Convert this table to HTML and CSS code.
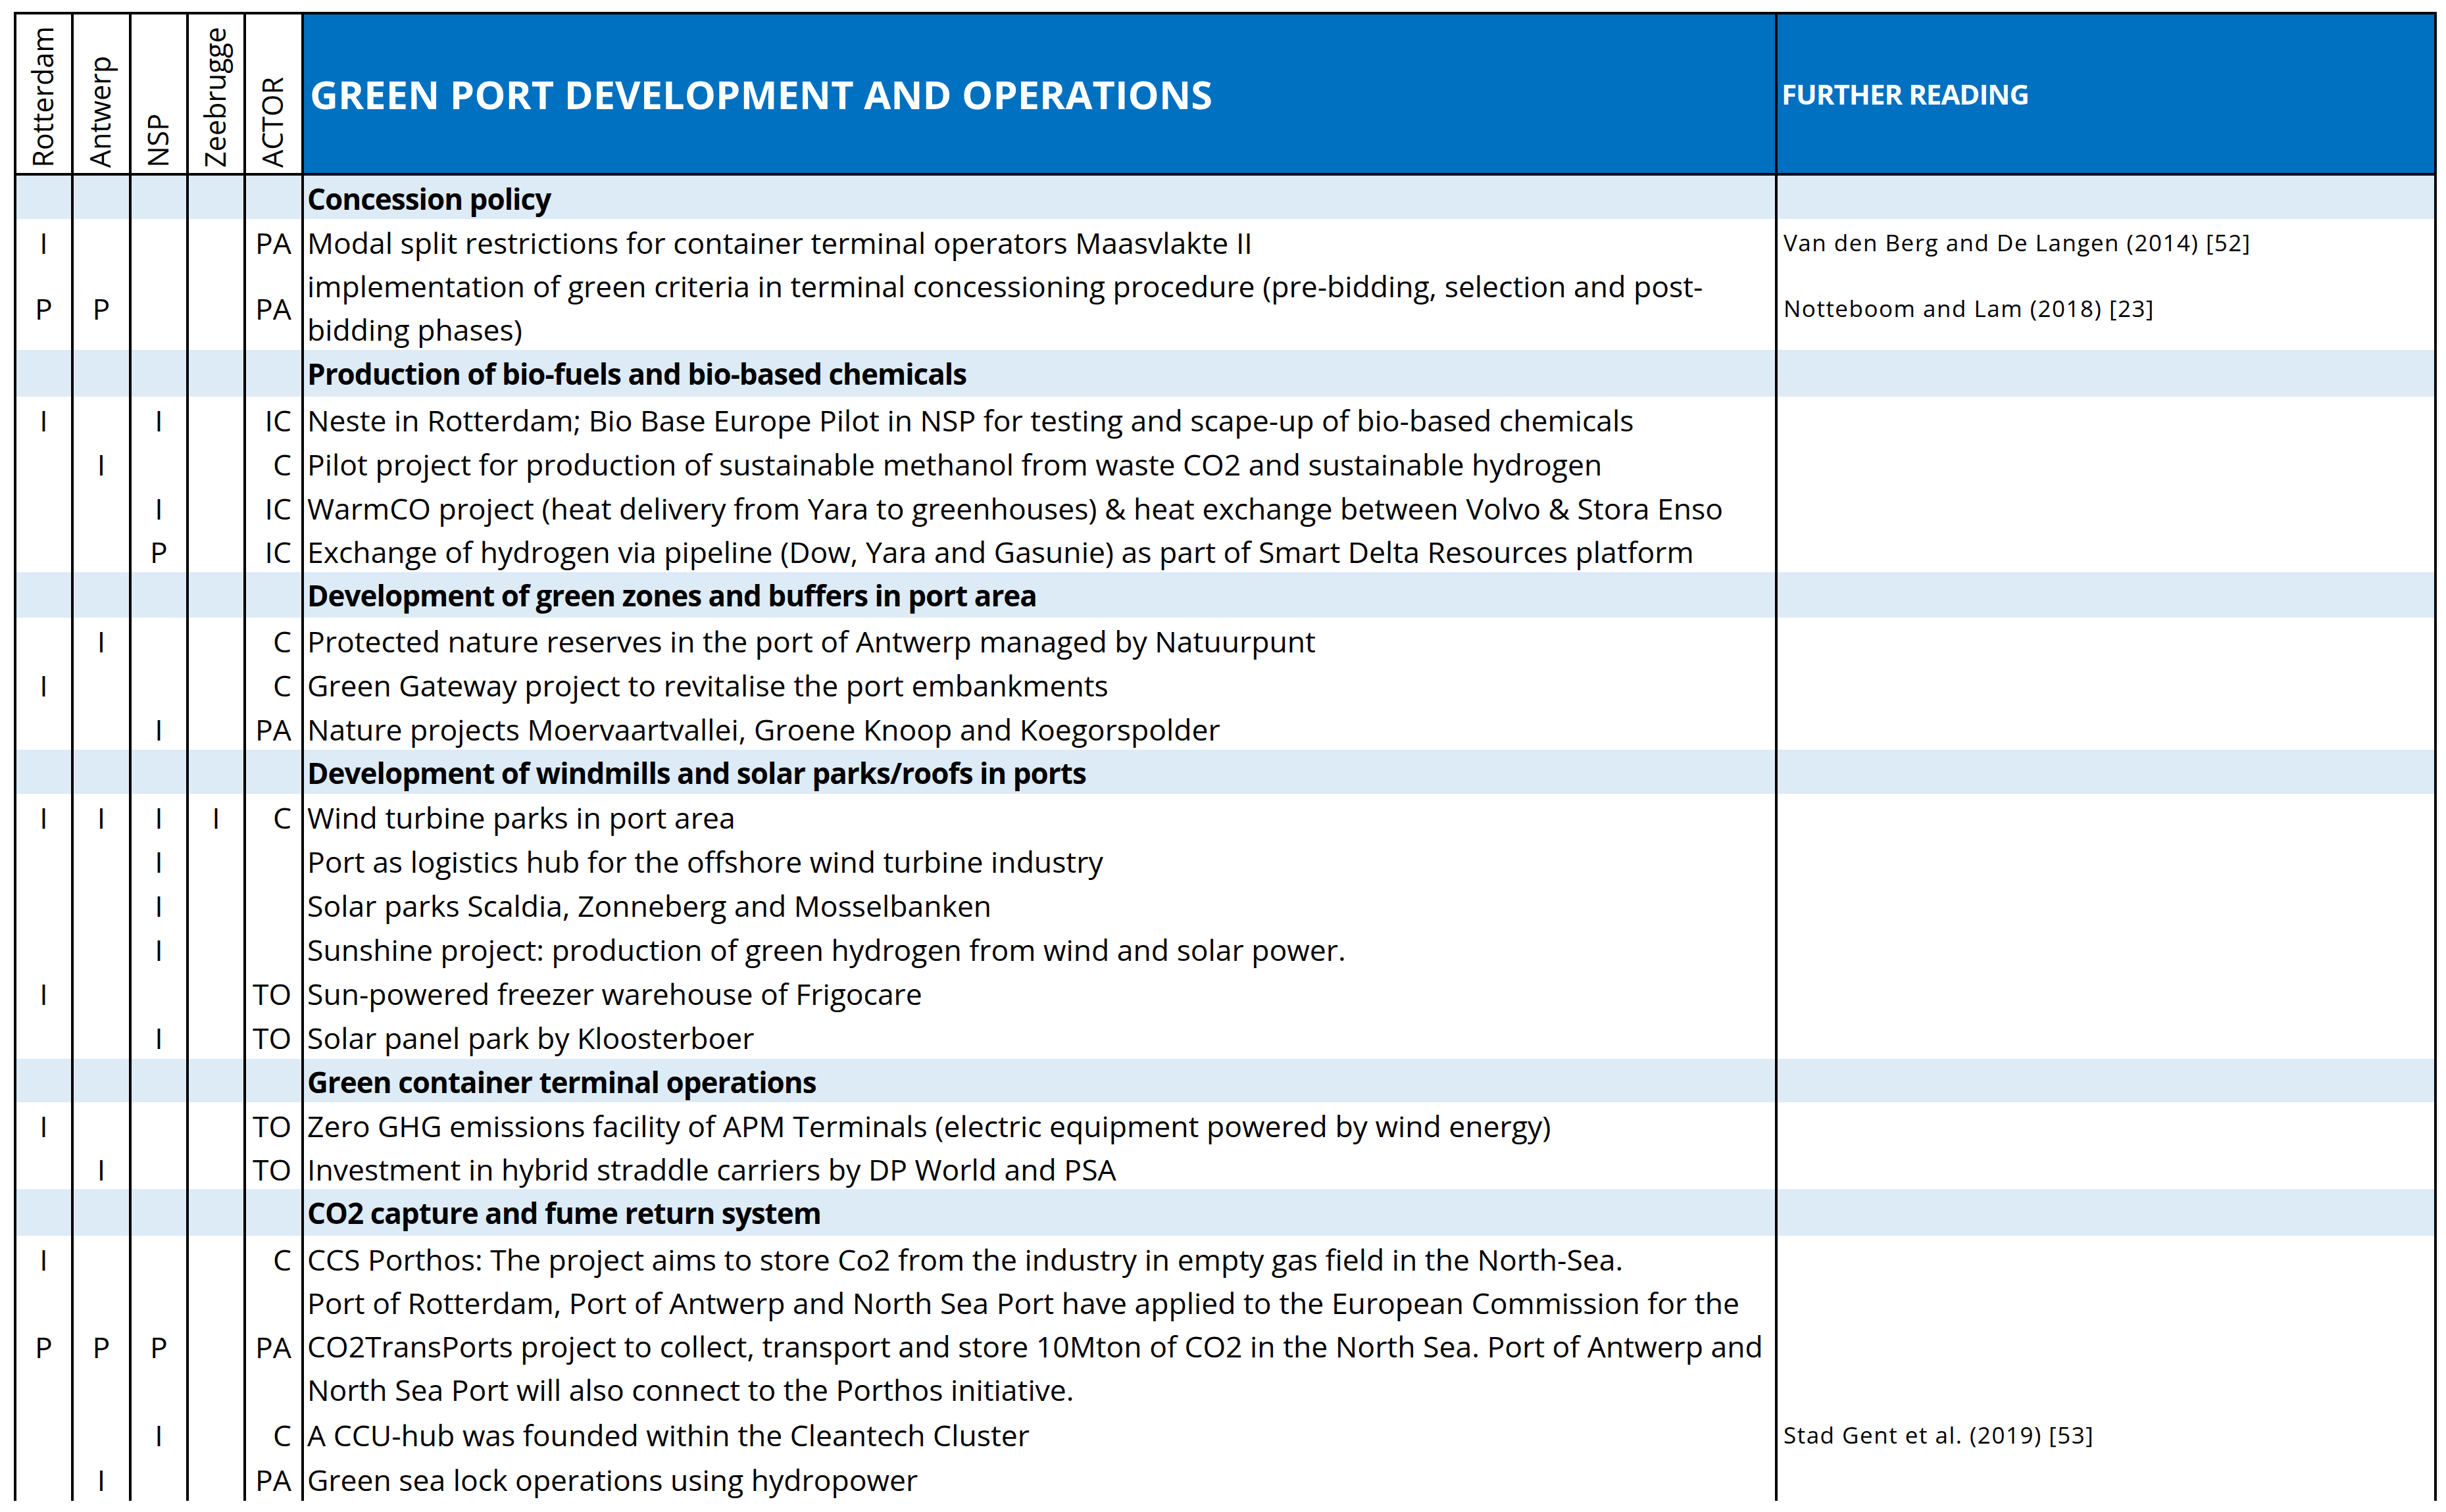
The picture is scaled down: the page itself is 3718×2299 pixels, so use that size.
FILE: index.html
```html
<!DOCTYPE html>
<html lang="en">
<head>
<meta charset="utf-8">
<title>Green port development and operations</title>
<link rel="stylesheet" href="styles.css">
</head>
<body>
<div class="sheet">
  <div class="row head">
    <div class="cell rot"><span>Rotterdam</span></div>
    <div class="cell rot"><span>Antwerp</span></div>
    <div class="cell rot"><span>NSP</span></div>
    <div class="cell rot"><span>Zeebrugge</span></div>
    <div class="cell rot"><span>ACTOR</span></div>
    <div class="cell blue title">GREEN PORT DEVELOPMENT AND OPERATIONS</div>
    <div class="cell blue frhead">FURTHER READING</div>
  </div>

  <div class="row band h66">
    <div class="cell"></div><div class="cell"></div><div class="cell"></div><div class="cell"></div><div class="cell"></div>
    <div class="cell desc sec">Concession policy</div><div class="cell"></div>
  </div>
  <div class="row h67">
    <div class="cell port">I</div><div class="cell port"></div><div class="cell port"></div><div class="cell port"></div><div class="cell actor">PA</div>
    <div class="cell desc">Modal split restrictions for container terminal operators Maasvlakte II</div>
    <div class="cell fr">Van den Berg and De Langen (2014) [52]</div>
  </div>
  <div class="row h132">
    <div class="cell port">P</div><div class="cell port">P</div><div class="cell port"></div><div class="cell port"></div><div class="cell actor">PA</div>
    <div class="cell desc multi"><span>implementation of green criteria in terminal concessioning procedure (pre-bidding, selection and post-<br>bidding phases)</span></div>
    <div class="cell fr">Notteboom and Lam (2018) [23]</div>
  </div>

  <div class="row band h71">
    <div class="cell"></div><div class="cell"></div><div class="cell"></div><div class="cell"></div><div class="cell"></div>
    <div class="cell desc sec">Production of bio-fuels and bio-based chemicals</div><div class="cell"></div>
  </div>
  <div class="row h67">
    <div class="cell port">I</div><div class="cell port"></div><div class="cell port">I</div><div class="cell port"></div><div class="cell actor">IC</div>
    <div class="cell desc">Neste in Rotterdam; Bio Base Europe Pilot in NSP for testing and scape-up of bio-based chemicals</div>
    <div class="cell fr"></div>
  </div>
  <div class="row h67">
    <div class="cell port"></div><div class="cell port">I</div><div class="cell port"></div><div class="cell port"></div><div class="cell actor">C</div>
    <div class="cell desc">Pilot project for production of sustainable methanol from waste CO2 and sustainable hydrogen</div>
    <div class="cell fr"></div>
  </div>
  <div class="row h66">
    <div class="cell port"></div><div class="cell port"></div><div class="cell port">I</div><div class="cell port"></div><div class="cell actor">IC</div>
    <div class="cell desc">WarmCO project (heat delivery from Yara to greenhouses) &amp; heat exchange between Volvo &amp; Stora Enso</div>
    <div class="cell fr"></div>
  </div>
  <div class="row h67">
    <div class="cell port"></div><div class="cell port"></div><div class="cell port">P</div><div class="cell port"></div><div class="cell actor">IC</div>
    <div class="cell desc">Exchange of hydrogen via pipeline (Dow, Yara and Gasunie) as part of Smart Delta Resources platform</div>
    <div class="cell fr"></div>
  </div>

  <div class="row band h69">
    <div class="cell"></div><div class="cell"></div><div class="cell"></div><div class="cell"></div><div class="cell"></div>
    <div class="cell desc sec">Development of green zones and buffers in port area</div><div class="cell"></div>
  </div>
  <div class="row h67">
    <div class="cell port"></div><div class="cell port">I</div><div class="cell port"></div><div class="cell port"></div><div class="cell actor">C</div>
    <div class="cell desc">Protected nature reserves in the port of Antwerp managed by Natuurpunt</div>
    <div class="cell fr"></div>
  </div>
  <div class="row h67">
    <div class="cell port">I</div><div class="cell port"></div><div class="cell port"></div><div class="cell port"></div><div class="cell actor">C</div>
    <div class="cell desc">Green Gateway project to revitalise the port embankments</div>
    <div class="cell fr"></div>
  </div>
  <div class="row h67">
    <div class="cell port"></div><div class="cell port"></div><div class="cell port">I</div><div class="cell port"></div><div class="cell actor">PA</div>
    <div class="cell desc">Nature projects Moervaartvallei, Groene Knoop and Koegorspolder</div>
    <div class="cell fr"></div>
  </div>

  <div class="row band h67">
    <div class="cell"></div><div class="cell"></div><div class="cell"></div><div class="cell"></div><div class="cell"></div>
    <div class="cell desc sec">Development of windmills and solar parks/roofs in ports</div><div class="cell"></div>
  </div>
  <div class="row h67">
    <div class="cell port">I</div><div class="cell port">I</div><div class="cell port">I</div><div class="cell port">I</div><div class="cell actor">C</div>
    <div class="cell desc">Wind turbine parks in port area</div>
    <div class="cell fr"></div>
  </div>
  <div class="row h67">
    <div class="cell port"></div><div class="cell port"></div><div class="cell port">I</div><div class="cell port"></div><div class="cell actor"></div>
    <div class="cell desc">Port as logistics hub for the offshore wind turbine industry</div>
    <div class="cell fr"></div>
  </div>
  <div class="row h67">
    <div class="cell port"></div><div class="cell port"></div><div class="cell port">I</div><div class="cell port"></div><div class="cell actor"></div>
    <div class="cell desc">Solar parks Scaldia, Zonneberg and Mosselbanken</div>
    <div class="cell fr"></div>
  </div>
  <div class="row h67">
    <div class="cell port"></div><div class="cell port"></div><div class="cell port">I</div><div class="cell port"></div><div class="cell actor"></div>
    <div class="cell desc">Sunshine project: production of green hydrogen from wind and solar power.</div>
    <div class="cell fr"></div>
  </div>
  <div class="row h67">
    <div class="cell port">I</div><div class="cell port"></div><div class="cell port"></div><div class="cell port"></div><div class="cell actor">TO</div>
    <div class="cell desc">Sun-powered freezer warehouse of Frigocare</div>
    <div class="cell fr"></div>
  </div>
  <div class="row h68">
    <div class="cell port"></div><div class="cell port"></div><div class="cell port">I</div><div class="cell port"></div><div class="cell actor">TO</div>
    <div class="cell desc">Solar panel park by Kloosterboer</div>
    <div class="cell fr"></div>
  </div>

  <div class="row band h66">
    <div class="cell"></div><div class="cell"></div><div class="cell"></div><div class="cell"></div><div class="cell"></div>
    <div class="cell desc sec">Green container terminal operations</div><div class="cell"></div>
  </div>
  <div class="row h66">
    <div class="cell port">I</div><div class="cell port"></div><div class="cell port"></div><div class="cell port"></div><div class="cell actor">TO</div>
    <div class="cell desc">Zero GHG emissions facility of APM Terminals (electric equipment powered by wind energy)</div>
    <div class="cell fr"></div>
  </div>
  <div class="row h66">
    <div class="cell port"></div><div class="cell port">I</div><div class="cell port"></div><div class="cell port"></div><div class="cell actor">TO</div>
    <div class="cell desc">Investment in hybrid straddle carriers by DP World and PSA</div>
    <div class="cell fr"></div>
  </div>

  <div class="row band h71">
    <div class="cell"></div><div class="cell"></div><div class="cell"></div><div class="cell"></div><div class="cell"></div>
    <div class="cell desc sec">CO2 capture and fume return system</div><div class="cell"></div>
  </div>
  <div class="row h67">
    <div class="cell port">I</div><div class="cell port"></div><div class="cell port"></div><div class="cell port"></div><div class="cell actor">C</div>
    <div class="cell desc">CCS Porthos: The project aims to store Co2 from the industry in empty gas field in the North-Sea.</div>
    <div class="cell fr"></div>
  </div>
  <div class="row h200">
    <div class="cell port">P</div><div class="cell port">P</div><div class="cell port">P</div><div class="cell port"></div><div class="cell actor">PA</div>
    <div class="cell desc multi"><span>Port of Rotterdam, Port of Antwerp and North Sea Port have applied to the European Commission for the<br>CO2TransPorts project to collect, transport and store 10Mton of CO2 in the North Sea. Port of Antwerp and<br>North Sea Port will also connect to the Porthos initiative.</span></div>
    <div class="cell fr"></div>
  </div>
  <div class="row h68">
    <div class="cell port"></div><div class="cell port"></div><div class="cell port">I</div><div class="cell port"></div><div class="cell actor">C</div>
    <div class="cell desc">A CCU-hub was founded within the Cleantech Cluster</div>
    <div class="cell fr">Stad Gent et al. (2019) [53]</div>
  </div>
  <div class="row h64">
    <div class="cell port"></div><div class="cell port">I</div><div class="cell port"></div><div class="cell port"></div><div class="cell actor">PA</div>
    <div class="cell desc">Green sea lock operations using hydropower</div>
    <div class="cell fr"></div>
  </div>
</div>
</body>
</html>
```

FILE: styles.css
```css
html, body {
  margin: 0;
  padding: 0;
  background: #ffffff;
}

body {
  font-family: "Open Sans", "Noto Sans", sans-serif;
  color: #000000;
}

.sheet {
  margin: 18px 0 0 21px;
  width: max-content;
  border: 4px solid #000000;
  background: #000000;
  display: flex;
  flex-direction: column;
}

.row {
  display: grid;
  grid-template-columns: 83px 84px 83px 83px 84px 2236px 998px;
  column-gap: 4px;
  height: 67px;
}

.row > .cell {
  background: #ffffff;
  display: flex;
  align-items: center;
  box-sizing: border-box;
  padding-top: 2px;
  font-size: 44.5px;
  line-height: 67px;
  white-space: nowrap;
  overflow: visible;
  min-width: 0;
}

.band > .cell {
  background: #ddebf7;
}

.h64 { height: 64px; }
.h66 { height: 66px; }
.h67 { height: 67px; }
.h68 { height: 68px; }
.h69 { height: 69px; }
.h71 { height: 71px; }
.h132 { height: 132px; }
.h200 { height: 200px; }

/* header */
.head {
  height: 241px;
  margin-bottom: 4px;
}

.head > .rot {
  align-items: flex-end;
  justify-content: flex-start;
  padding-top: 0;
  padding-bottom: 8px;
}

.rot span {
  writing-mode: vertical-rl;
  transform: rotate(180deg);
  font-size: 43px;
  line-height: 79px;
  width: 79px;
}

.head > .blue {
  background: #0070c0;
  color: #ffffff;
  font-weight: 700;
  padding-top: 0;
}

.head > .title {
  font-size: 59.5px;
  padding-left: 9px;
}

.head > .frhead {
  font-size: 42px;
  letter-spacing: -1px;
  padding-left: 6px;
}

/* body cells */
.port {
  justify-content: center;
}

.actor {
  justify-content: flex-end;
  padding-right: 15px;
}

.desc {
  padding-left: 5px;
}

.row > .sec {
  font-weight: 700;
  font-size: 44px;
  letter-spacing: -1px;
}

.multi span {
  line-height: 66px;
}

.row > .fr {
  font-size: 35px;
  letter-spacing: 1.5px;
  padding-left: 9px;
}
```
